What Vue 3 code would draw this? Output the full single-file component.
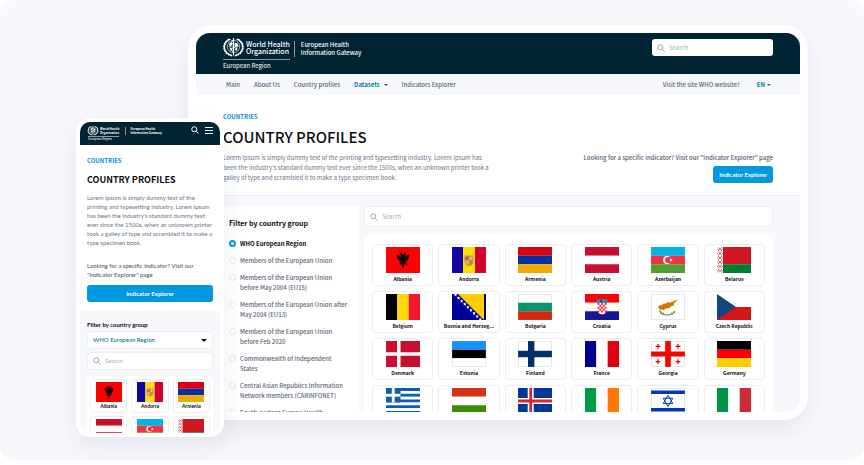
<script setup>
import { ref } from 'vue'

const rect = (fill, x, y, w, h) => ({ fill, d: `M${x} ${y}h${w}v${h}h${-w}z` })
const disc = (fill, x, y, r) => ({ fill, d: `M${x - r} ${y}a${r} ${r} 0 1 0 ${2 * r} 0a${r} ${r} 0 1 0 ${-2 * r} 0z` })
const rows = (...c) => c.map((f, i) => rect(f, 0, (i * 26) / c.length, 34, 26 / c.length))
const cols = (...c) => c.map((f, i) => rect(f, (i * 34) / c.length, 0, 34 / c.length, 26))
const line = (stroke, width, d) => ({ fill: 'none', stroke, width, d })

const starPath = (cx, cy, r, n = 5) => {
  let d = ''
  for (let i = 0; i < n * 2; i++) {
    const a = (Math.PI * i) / n - Math.PI / 2
    const k = i % 2 ? r * 0.45 : r
    d += `${i ? 'L' : 'M'}${(cx + k * Math.cos(a)).toFixed(2)} ${(cy + k * Math.sin(a)).toFixed(2)}`
  }
  return d + 'z'
}
const star = (fill, x, y, r, n) => ({ fill, d: starPath(x, y, r, n) })

const checks = []
for (let y = 0; y < 5; y++) {
  for (let x = 0; x < 5; x++) {
    if ((x + y) % 2 === 0) checks.push(rect('#f11c24', 12.5 + x * 1.8, 9 + y * 1.9, 1.8, 1.9))
  }
}
const ornament = []
for (let i = 0; i < 6; i++) {
  const y = i * 4.3 + 0.4
  ornament.push(line('#c8313e', 0.8, `M1 ${y}l2 1.8l2-1.8M1 ${y + 3.6}l2-1.8l2 1.8M.4 ${y + 1.4}v1M5.6 ${y + 1.4}v1`))
}
const bosniaStars = []
for (let i = 0; i < 9; i++) bosniaStars.push(star('#fff', 3.5 + i * 3.1, 1 + i * 3.05, 1.9))
const smallCross = (x, y) => line('#f00', 1.3, `M${x - 2.4} ${y}h4.8M${x} ${y - 2.4}v4.8`)

// Half of the eagle, drawn to the left of x = 17 and mirrored
const eagleHalf = [[17, 8], [15.6, 5.6], [13, 5.8], [14.4, 7], [13.4, 8], [15.4, 8.4], [15, 9.8], [13, 8.4], [10.6, 7.4], [11.4, 9.2], [10.6, 10.4], [12, 10.8], [11, 12], [12.6, 12.3], [11.8, 13.6], [13.8, 13.2], [13.2, 15], [15, 14.4], [13, 17.6], [14.2, 17.6], [15.6, 16.8], [15.8, 19], [17, 21.4]]
const eagle = 'M' + [...eagleHalf, ...eagleHalf.slice(1, -1).reverse().map(([x, y]) => [34 - x, y])].map((p) => p.join(' ')).join('L') + 'z'

const countries = [
  { name: 'Albania', art: [rect('#f00', 0, 0, 34, 26), { fill: '#16080a', d: eagle }] },
  { name: 'Andorra', art: [rect('#10069f', 0, 0, 11, 26), rect('#fedd00', 11, 0, 12, 26), rect('#d50032', 23, 0, 11, 26), { fill: '#b99a67', d: 'M13 8l2.3 1L17 7.8 18.7 9l2.3-1 1 3-.8 5.2-1.7 2-2.5 1-2.5-1-1.7-2L12 11z' }, rect('#dc4b3f', 13.6, 9.8, 3, 3), rect('#edc340', 17.4, 9.8, 3, 3), rect('#edc340', 13.8, 13.4, 2.8, 3), rect('#dc6950', 17.4, 13.4, 2.8, 3)] },
  { name: 'Armenia', art: rows('#d90012', '#0033a0', '#f2a800') },
  { name: 'Austria', art: rows('#c8102e', '#fff', '#c8102e') },
  { name: 'Azerbaijan', art: [...rows('#00b5e2', '#ef3340', '#509e2f'), disc('#fff', 16, 13, 3.9), disc('#ef3340', 17.2, 13, 3.1), star('#fff', 20, 13, 1.9, 8)] },
  { name: 'Belarus', art: [rect('#ce1720', 0, 0, 34, 17.3), rect('#007c30', 0, 17.3, 34, 8.7), rect('#fff', 0, 0, 6, 26), ...ornament] },
  { name: 'Belgium', art: cols('#000', '#ffd90c', '#f31830') },
  { name: 'Bosnia and Herzeg...', art: [rect('#000099', 0, 0, 34, 26), { fill: '#fc0', d: 'M6 0h26v26z' }, ...bosniaStars] },
  { name: 'Bulgaria', outlined: true, art: rows('#fff', '#00966e', '#d62612') },
  { name: 'Croatia', art: [...rows('#f00', '#fff', '#171796'), { fill: '#fff', d: 'M12.5 9h9v6q0 5-4.5 5.5-4.5-.5-4.5-5.5z' }, ...checks, { fill: '#258ec5', d: 'M11.2 5l2.2 1 1.5-1.6L17 5.5l2.1-1.1L20.6 6l2.2-1-.8 4H12z' }, rect('#1d2e83', 15.5, 5.8, 1.2, 2.8), rect('#df4450', 18, 5.8, 1, 2.8)] },
  { name: 'Cyprus', outlined: true, art: [rect('#fff', 0, 0, 34, 26), { fill: '#d57800', d: 'M7 13l1.6-1.7 2.3.2 1-1.7 3.2-.2 1-1.4 3.6.3 3.2-1.5 4.6-2-4.2 3.9-.6 2.5-2.5.8-2 2.1-3.3.1-2.2 1.7-3.8-.7z' }, line('#6b7d45', 1.2, 'M8.5 16.5q2 4.5 7.5 4.5t8-4'), line('#6b7d45', 0.8, 'M10 17l-.2 2.6M12.5 18.5l-1 2M20.5 18.5l1 2M23 17l.2 2.3')] },
  { name: 'Czech Republic', art: [rect('#fff', 0, 0, 34, 13), rect('#d7141a', 0, 13, 34, 13), { fill: '#11457e', d: 'M0 0l19 13L0 26z' }] },
  { name: 'Denmark', art: [rect('#c8102e', 0, 0, 34, 26), rect('#fff', 11, 0, 3.5, 26), rect('#fff', 0, 11.3, 34, 3.4)] },
  { name: 'Estonia', outlined: true, art: rows('#1791ff', '#000', '#fff') },
  { name: 'Finland', outlined: true, art: [rect('#fff', 0, 0, 34, 26), rect('#002f6c', 10, 0, 6.4, 26), rect('#002f6c', 0, 9.8, 34, 6.4)] },
  { name: 'France', art: cols('#000091', '#fff', '#e1000f') },
  { name: 'Georgia', outlined: true, art: [rect('#fff', 0, 0, 34, 26), rect('#f00', 14.2, 0, 5.6, 26), rect('#f00', 0, 10.4, 34, 5.2), smallCross(7, 5.4), smallCross(27, 5.4), smallCross(7, 20.6), smallCross(27, 20.6)] },
  { name: 'Germany', art: rows('#000', '#f00', '#fc0') },
  { name: 'Greece', art: [...rows('#0d5eaf', '#fff', '#0d5eaf', '#fff', '#0d5eaf', '#fff', '#0d5eaf', '#fff', '#0d5eaf'), rect('#0d5eaf', 0, 0, 14.5, 14.44), rect('#fff', 5.8, 0, 2.9, 14.44), rect('#fff', 0, 5.8, 14.5, 2.9)] },
  { name: 'Hungary', art: rows('#d43516', '#fff', '#388d00') },
  { name: 'Iceland', art: [rect('#003897', 0, 0, 34, 26), rect('#fff', 9.7, 0, 6, 26), rect('#fff', 0, 10, 34, 6), rect('#d72828', 11.3, 0, 2.8, 26), rect('#d72828', 0, 11.6, 34, 2.8)] },
  { name: 'Ireland', art: cols('#009a49', '#fff', '#ff7900') },
  { name: 'Israel', outlined: true, art: [rect('#fff', 0, 0, 34, 26), rect('#0038b8', 0, 2.5, 34, 3.6), rect('#0038b8', 0, 20, 34, 3.6), line('#0038b8', 1, 'M17 7.2l4.8 8.4h-9.6zM17 18.6l-4.8-8.4h9.6z')] },
  { name: 'Italy', art: cols('#009246', '#fff', '#ce2b37') },
]

const leaves = []
for (let i = 0; i < 9; i++) {
  const a = 0.3 + i * 0.29
  const x = 18.5 * Math.sin(a)
  const y = 20 + 17 * Math.cos(a)
  const turn = (a * 180) / Math.PI
  leaves.push({ x: 23 - x, y, r: turn + 22 }, { x: 23 + x, y, r: -turn - 22 })
}

const groups = [
  'WHO European Region',
  'Members of the European Union',
  'Members of the European Union before May 2004 (EU15)',
  'Members of the European Union after May 2004 (EU13)',
  'Members of the European Union before Feb 2020',
  'Commonwealth of Independent States',
  'Central Asian Republics Information Network members (CARINFONET)',
  'South-eastern Europe Health Network',
]
const selected = ref(groups[0])
const lorem = "Lorem Ipsum is simply dummy text of the printing and typesetting industry. Lorem Ipsum has been the industry's standard dummy text ever since the 1500s, when an unknown printer took a galley of type and scrambled it to make a type specimen book."
const devices = [
  { kind: 'phone', list: countries.slice(0, 6) },
  { kind: 'desktop', list: countries },
]
</script>

<template>
  <main class="stage">
    <section v-for="{ kind, list } in devices" :key="kind" class="device" :class="kind">
      <div class="screen">
        <header class="masthead">
          <a class="brand" href="#">
            <span class="who">
              <span class="who-top">
                <svg class="emblem" viewBox="0 0 46 40" aria-hidden="true">
                  <ellipse v-for="(l, i) in leaves" :key="i" rx="3.8" ry="1.7" :transform="`translate(${l.x} ${l.y}) rotate(${l.r})`" fill="#fff" />
                  <g fill="none" stroke="#fff">
                    <circle cx="23" cy="19" r="12.5" stroke-width="1.2" />
                    <path d="M10.5 19h25M14 10.5l18 17M32 10.5l-18 17" stroke-width=".7" />
                    <circle cx="23" cy="19" r="7.5" stroke-width=".8" />
                    <path d="M23 2v35" stroke-width="2.2" />
                    <path d="M24 7q-6 1-5 4t5 3 4 4-5 4-4 4 4 3" stroke-width="1.8" />
                  </g>
                  <path d="M14 14l3-3 4 1-1 4-4 3zM26 11l5 2 2 5-4 2-3-3zM15 22l4-1 1 4-2 3zM27 22l4-1-1 5-3 2z" fill="#fff" />
                </svg>
                <strong>World Health<br>Organization</strong>
              </span>
              <span class="region">European Region</span>
            </span>
            <span class="gateway">European Health<br>Information Gateway</span>
          </a>
          <label v-if="kind === 'desktop'" class="search head-search">
            <svg viewBox="0 0 16 16" aria-hidden="true"><circle cx="6.5" cy="6.5" r="5" /><path d="M10.2 10.2l5 5" /></svg>
            <input type="search" placeholder="Search" aria-label="Search the site">
          </label>
          <div v-else class="tools">
            <button type="button" aria-label="Search"><svg viewBox="0 0 16 16"><circle cx="6.5" cy="6.5" r="5" /><path d="M10.2 10.2l5 5" /></svg></button>
            <button type="button" aria-label="Menu"><svg viewBox="0 0 16 16"><path d="M0 3h16M0 9h16M0 15h16" /></svg></button>
          </div>
        </header>

        <nav v-if="kind === 'desktop'" class="menu">
          <a href="#">Main</a>
          <a href="#">About Us</a>
          <a href="#">Country profiles</a>
          <button type="button" class="active datasets">Datasets <i class="caret"></i></button>
          <a href="#">Indicators Explorer</a>
          <a class="site" href="#">Visit the site WHO website?</a>
          <button type="button" class="active">EN <i class="caret"></i></button>
        </nav>

        <section class="hero">
          <p class="eyebrow">COUNTRIES</p>
          <h1>COUNTRY PROFILES</h1>
          <div class="intro">
            <p class="lorem">{{ lorem }}</p>
            <div class="cta">
              <p>Looking for a specific indicator? Visit our "Indicator Explorer" page</p>
              <button type="button">Indicator Explorer</button>
            </div>
          </div>
        </section>

        <section class="content">
          <fieldset v-if="kind === 'desktop'" class="filter">
            <legend>Filter by country group</legend>
            <label v-for="g in groups" :key="g" :class="{ on: selected === g }">
              <input v-model="selected" type="radio" name="group" :value="g">
              <span>{{ g }}</span>
            </label>
          </fieldset>
          <div v-else class="picker">
            <label for="group-select">Filter by country group</label>
            <div class="select-box">
              <select id="group-select" v-model="selected">
                <option v-for="g in groups" :key="g">{{ g }}</option>
              </select>
              <i class="caret"></i>
            </div>
          </div>
          <div class="results">
            <label class="search">
              <svg viewBox="0 0 16 16" aria-hidden="true"><circle cx="6.5" cy="6.5" r="5" /><path d="M10.2 10.2l5 5" /></svg>
              <input type="search" placeholder="Search" aria-label="Search countries">
            </label>
            <div class="grid">
              <a v-for="c in list" :key="c.name" class="card" href="#">
                <svg class="flag" viewBox="0 0 34 26" preserveAspectRatio="none" aria-hidden="true">
                  <path v-for="(s, i) in c.art" :key="i" :d="s.d" :fill="s.fill" :stroke="s.stroke" :stroke-width="s.width" />
                  <path v-if="c.outlined" d="M.5.5h33v25H.5z" fill="none" stroke="#8890b0" stroke-opacity=".2" />
                </svg>
                <span>{{ c.name }}</span>
              </a>
            </div>
          </div>
        </section>
      </div>
    </section>
  </main>
</template>

<style>
body {
  background: #fff;
}
</style>

<style scoped>
* {
  box-sizing: border-box;
}
.stage {
  display: flex;
  height: calc(100vh - 5px);
  padding: 25px 56px 0 76px;
  overflow: hidden;
  border-radius: 14px;
  background: #f7f8fc;
  color: #0b0d12;
  font: 500 6px/10px "Noto Sans CJK SC", "Noto Sans", sans-serif;
}
p, h1, fieldset, legend {
  margin: 0;
  padding: 0;
  border: 0;
}
a {
  color: inherit;
  text-decoration: none;
}
button, input, select {
  margin: 0;
  padding: 0;
  border: 0;
  background: none;
  color: inherit;
  font: inherit;
}
.device {
  min-width: 0;
  background: #fff;
  box-shadow: 0 10px 24px rgba(30, 40, 70, 0.08);
}
.desktop {
  flex: 1;
  margin: 0 0 40px -36px;
  padding: 8px;
  border-radius: 24px;
}
.phone {
  z-index: 1;
  flex: 0 0 148px;
  margin: 93px 0 23px;
  padding: 4px;
  border-radius: 14px;
  font-family: Lato, "Noto Sans", sans-serif;
}
.screen {
  display: flex;
  flex-direction: column;
  height: 100%;
  overflow: hidden;
  border-radius: 14px;
  background: #f7f8fc;
}
.phone .screen {
  border-radius: 10px;
}
.screen > * {
  flex-shrink: 0;
}

/* Masthead */
.masthead {
  display: flex;
  justify-content: space-between;
  align-items: flex-start;
  height: 41px;
  padding: 4px 27px 0 26px;
  background: #002433;
  color: #fff;
}
.brand {
  display: flex;
  gap: 4px;
}
.who-top {
  display: flex;
  gap: 1px;
}
.emblem {
  width: 23px;
  height: 20px;
}
.who strong {
  padding-top: 4px;
  font-size: 7px;
  font-weight: 500;
  line-height: 7px;
}
.region {
  display: block;
  margin: 2px 0 0 1px;
  border-top: 1px solid #8d9ba3;
  line-height: 12px;
  font-weight: 400;
}
.gateway {
  align-self: flex-start;
  margin-top: 4px;
  padding-left: 6px;
  border-left: 1px solid #8d9ba3;
  line-height: 8px;
}
.phone .masthead {
  height: 23px;
  padding: 3px 7px 0;
  font-family: "Noto Sans CJK SC", "Noto Sans", sans-serif;
}
.phone .brand {
  gap: 6px;
}
.phone .emblem {
  width: 12px;
  height: 11px;
}
.phone .who strong {
  padding-top: 2px;
  font-size: 3px;
  font-weight: 700;
  line-height: 4px;
}
.phone .region {
  margin-top: 0;
  font-size: 3px;
  line-height: 5px;
}
.phone .gateway {
  margin-top: 2px;
  padding-left: 4px;
  font-size: 3px;
  font-weight: 700;
  line-height: 4px;
}
.tools {
  display: flex;
  gap: 6px;
  padding-top: 1px;
}
.tools button {
  display: flex;
}
.tools svg {
  width: 8px;
  height: 8px;
  fill: none;
  stroke: #fff;
  stroke-width: 2;
}

/* Search boxes */
.search {
  display: flex;
  align-items: center;
  gap: 4px;
  height: 21px;
  padding: 0 5px;
  border: 1px solid #eceef4;
  border-radius: 4px;
  background: #fff;
}
.search svg {
  flex: none;
  width: 8px;
  height: 8px;
  fill: none;
  stroke: #8b91a5;
  stroke-width: 1.6;
}
.search input {
  flex: 1;
  min-width: 0;
  outline: 0;
  font-weight: 400;
}
.search input::placeholder {
  color: #a5abbb;
}
.head-search {
  width: 121px;
  height: 17px;
  margin-top: 2px;
  border: 0;
  border-radius: 3px;
}

/* Navigation */
.menu {
  display: flex;
  align-items: center;
  gap: 14px;
  height: 21px;
  padding: 0 29px 0 30px;
  color: #5a6377;
}
.active {
  display: flex;
  align-items: center;
  gap: 2px;
  color: #0077a8;
  font-weight: 700;
}
.datasets {
  gap: 4px;
}
.datasets .caret {
  color: #3b4a5f;
}
.caret {
  border: 2px solid transparent;
  border-top-color: currentColor;
  border-bottom: 0;
}
.site {
  margin: 0 3px 0 auto;
}

/* Hero */
.hero {
  padding: 16px 27px 12px;
  border-bottom: 1px solid #eceef4;
  background: #fff;
}
.eyebrow {
  color: #0091d2;
  font-weight: 700;
  line-height: 12px;
}
h1 {
  margin: 6px 0 8px;
  font-size: 15px;
  font-weight: 500;
  line-height: 16px;
}
.intro {
  display: flex;
  justify-content: space-between;
}
.lorem {
  width: 272px;
  color: #6b7385;
  font-weight: 400;
}
.cta {
  color: #545d70;
  text-align: right;
}
.cta button {
  height: 17px;
  margin-top: 3px;
  padding: 0 6px;
  border-radius: 3px;
  background: #0099e0;
  color: #fff;
  font-family: Lato, "Noto Sans", sans-serif;
  font-weight: 700;
}
.phone .hero {
  padding: 10px 7px 9px;
  border: 0;
}
.phone h1 {
  margin: 7px 0;
  font-family: "Noto Sans CJK SC", "Noto Sans", sans-serif;
  font-size: 9px;
  font-weight: 700;
  line-height: 12px;
}
.phone .eyebrow {
  font-family: "Noto Sans CJK SC", "Noto Sans", sans-serif;
}
.phone .intro {
  flex-direction: column;
  gap: 14px;
}
.phone .lorem {
  width: auto;
  line-height: 9px;
}
.phone .cta {
  line-height: 9px;
  text-align: left;
}
.phone .cta p {
  max-width: 112px;
}
.phone .cta button {
  width: 100%;
  margin-top: 6px;
}

/* Content */
.content {
  display: flex;
  gap: 5px;
  padding: 10px 27px 0;
}
.filter {
  display: flex;
  flex: 0 0 136px;
  flex-direction: column;
  gap: 7px;
  padding: 12px 11px 0 6px;
  border-radius: 4px;
  background: #fff;
  color: #5c6579;
}
.filter legend {
  float: left;
  margin-bottom: 4px;
  color: #0b0d12;
  font-size: 7px;
  font-weight: 700;
}
.filter label {
  display: flex;
  gap: 4px;
}
.filter .on {
  color: #0b0d12;
  font-weight: 700;
}
.filter input {
  flex: none;
  width: 7px;
  height: 7px;
  margin-top: 1px;
  border: 1px solid #e5e8ef;
  border-radius: 50%;
  appearance: none;
}
.filter input:checked {
  border: 2px solid #0099e0;
}
.results {
  flex: 1;
  min-width: 0;
}
.grid {
  display: grid;
  grid-template-columns: repeat(6, minmax(0, 1fr));
  gap: 5px;
  margin-top: 7px;
  padding: 10px 8px;
  border-radius: 4px;
  background: #fff;
}
.card {
  display: flex;
  flex-direction: column;
  align-items: center;
  height: 42px;
  padding: 2px;
  border: 1px solid #eceef4;
  border-radius: 4px;
  font-size: 5px;
  font-weight: 700;
}
.flag {
  flex: none;
  width: 34px;
  height: 26px;
}
.card span {
  max-width: 54px;
  line-height: 11px;
  white-space: nowrap;
}
.phone .content {
  flex-direction: column;
  gap: 3px;
  padding: 9px 7px;
}
.picker > label {
  display: block;
  font-weight: 700;
}
.select-box {
  display: flex;
  align-items: center;
  height: 18px;
  margin-top: 1px;
  padding: 0 5px;
  border: 1px solid #eceef4;
  border-radius: 4px;
  background: #fff;
}
.select-box select {
  flex: 1;
  min-width: 0;
  color: #0077a0;
  appearance: none;
}
.select-box .caret {
  border-width: 3px 3px 0;
}
.phone .search {
  height: 18px;
}
.phone .grid {
  grid-template-columns: repeat(3, minmax(0, 1fr));
  gap: 3px 4px;
  margin-top: 6px;
  padding: 3px;
}
.phone .card {
  height: 34px;
}
.phone .flag {
  width: 26px;
  height: 20px;
}
.phone .card span {
  line-height: 9px;
}
</style>
